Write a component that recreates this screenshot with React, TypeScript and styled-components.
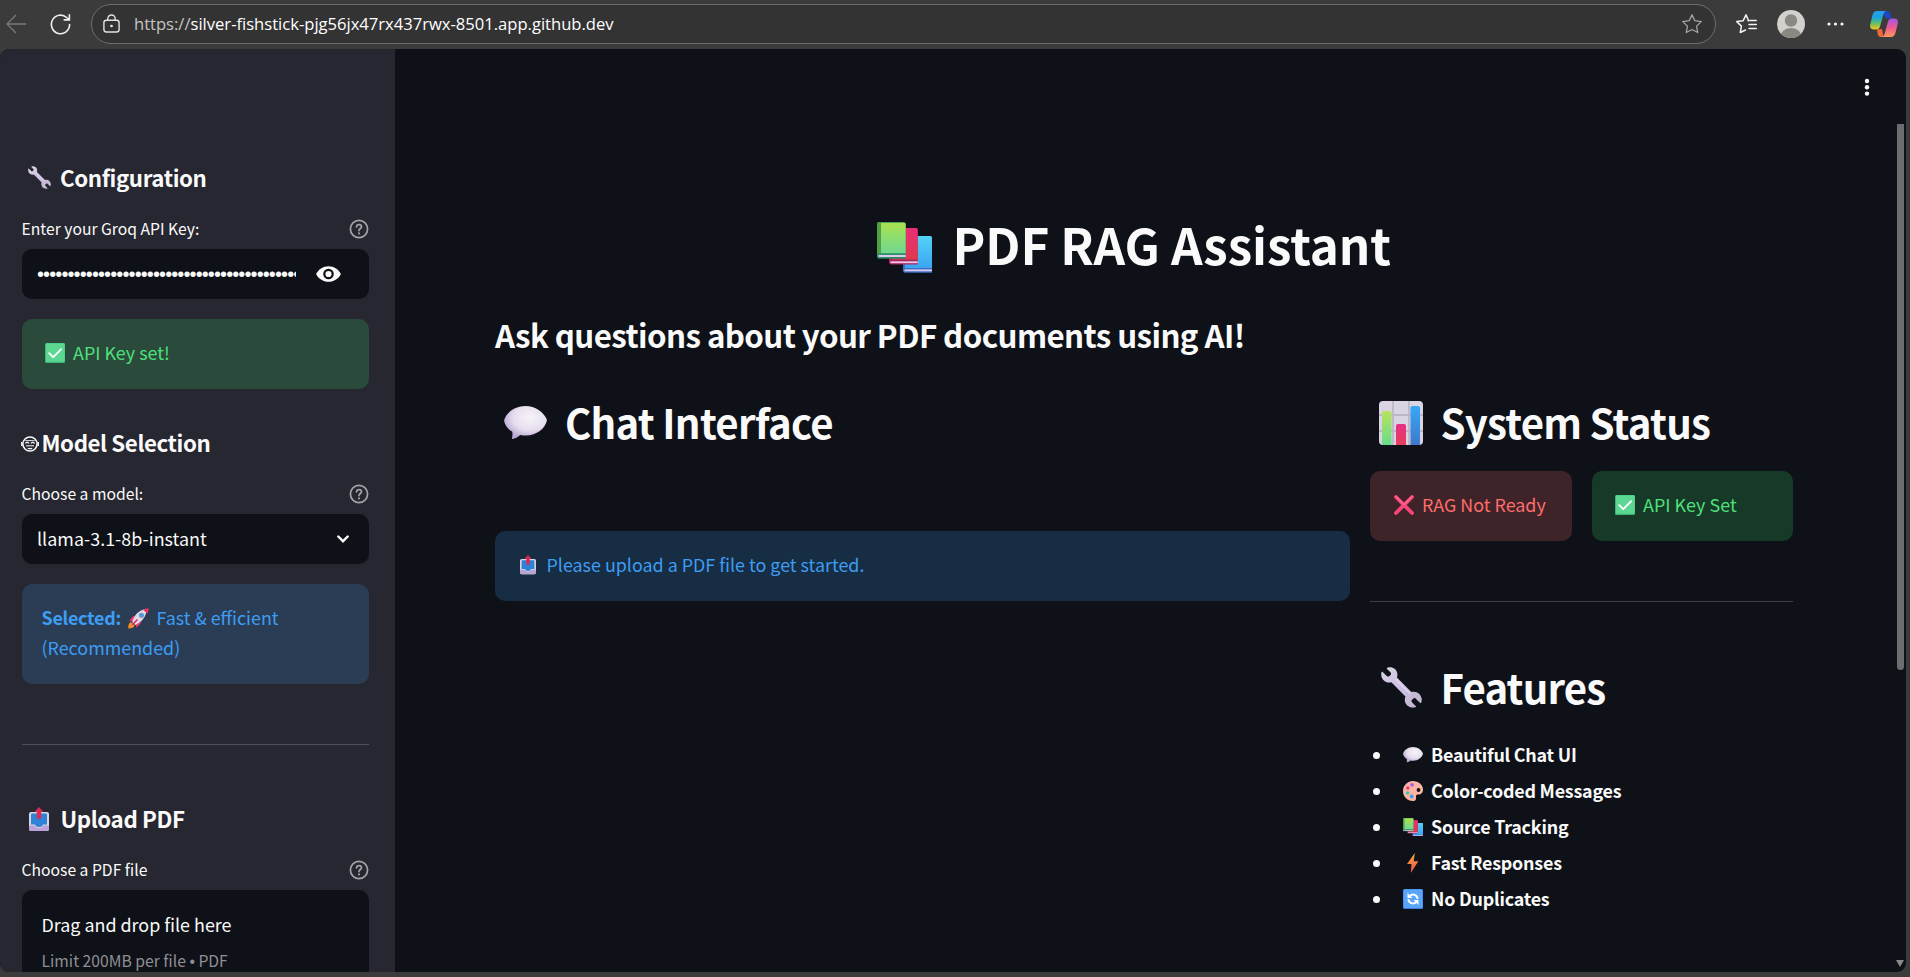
import React from "react";
import styled, { createGlobalStyle } from "styled-components";

const Global = createGlobalStyle`
  *{box-sizing:border-box}
  body{margin:0;background:#3b3b3b;overflow:hidden}
`;
const FONT = `"Noto Sans CJK SC","Noto Sans",sans-serif`;

const Window = styled.div`
  width:1910px;height:977px;display:flex;flex-direction:column;background:#3b3b3b;
  font-family:${FONT};color:#fafafa;
`;
const Toolbar = styled.header`
  height:49px;display:flex;align-items:center;padding:0 12px 1px 6px;flex:none;
`;
const IconSlot = styled.span<{ $w: number; $ml?: number; $mt?: number }>`
  display:flex;flex:none;width:${p => p.$w}px;margin-left:${p => p.$ml || 0}px;margin-top:${p => p.$mt || 0}px;
  svg{display:block;width:100%}
`;
const Address = styled.div`
  flex:none;width:1625px;height:40px;margin-left:20px;border:1px solid #6d6d6d;border-radius:20px;background:#333;
  display:flex;align-items:center;padding:0 13px 0 11px;
`;
const Url = styled.span`
  flex:1;margin-left:14px;font:16.6px/38px "Open Sans","Noto Sans",sans-serif;letter-spacing:-.01px;color:#fff;white-space:nowrap;
  i{font-style:normal;color:#c4c4c4}
`;
const Page = styled.div`
  width:1906px;height:923px;border-radius:9px;overflow:hidden;display:flex;background:#0e1117;
`;
const Sidebar = styled.aside`
  width:395px;flex:none;background:#262730;padding:113px 26px 0 22px;
`;
const Txt = styled.span<{ $s: number; $ls?: number; $b?: number; $ml?: number }>`
  font-size:${p => p.$s}px;letter-spacing:${p => p.$ls || 0}px;font-weight:${p => p.$b || 400};
  margin-left:${p => p.$ml || 0}px;white-space:nowrap;line-height:inherit;
`;
const Bullet = styled.span`font-family:"Liberation Sans",sans-serif;`;
const SideHeading = styled.h3<{ $mt?: number }>`
  margin:${p => p.$mt || 0}px 0 0;height:31px;line-height:31px;display:flex;align-items:center;font-size:22px;
`;
const Label = styled.div`
  margin:21px 0 5px;height:30px;line-height:30px;display:flex;align-items:center;justify-content:space-between;
`;
const Field = styled.div<{ $pr?: number }>`
  height:50px;line-height:48px;border-radius:10px;background:#0e1117;display:flex;align-items:center;
  padding:0 ${p => p.$pr || 20}px 0 15px;justify-content:space-between;
`;
const FieldText = styled.span`height:50px;`;
const Dots = styled.span`
  width:259px;overflow:hidden;white-space:nowrap;font:20px/50px "Liberation Sans",sans-serif;letter-spacing:-.9px;
`;
const tones = {
  greenSide: ["#2a4a3b", "#4fe07c"], blueSide: ["#2b3d55", "#3d9df3"],
  red: ["#3e2428", "#ff6c6c"], green: ["#173928", "#4fe07c"], blue: ["#172d43", "#3d9df3"],
};
const Alert = styled.div<{ $t: keyof typeof tones; $mt?: number; $pl?: number; $w?: number }>`
  margin-top:${p => p.$mt || 0}px;padding:19px 0 21px ${p => p.$pl || 20}px;border-radius:10px;line-height:30px;
  width:${p => (p.$w ? p.$w + "px" : "auto")};background:${p => tones[p.$t][0]};color:${p => tones[p.$t][1]};
`;
const Line = styled.div`
  height:30px;display:flex;align-items:center;
  ${Txt}{height:30px;line-height:29px;padding-bottom:1px}
`;
const Rule = styled.hr<{ $c: string }>`
  border:0;height:1px;margin:60px 0 0;background:${p => p.$c};
`;
const Drop = styled.div`
  height:120px;border-radius:10px 10px 0 0;background:#0e1117;padding:19px 20px 0 19.500px;
`;
const DropLine = styled.div<{ $h: number; $dim?: boolean }>`
  height:${p => p.$h}px;line-height:${p => p.$h}px;color:${p => (p.$dim ? "#8e8f94" : "#fafafa")};
`;
const Main = styled.main`width:1501px;flex:none;padding:155px 0 0 100px;`;
const Title = styled.h1`margin:0;height:80px;line-height:80px;display:flex;align-items:center;padding-left:382px;`;
const Sub = styled.h3`margin:26px 0 0;height:50px;line-height:50px;`;
const Columns = styled.div`display:flex;gap:20px;margin-top:31px;`;
const Column = styled.section<{ $w: number }>`width:${p => p.$w}px;flex:none;`;
const Heading = styled.h2<{ $mt?: number; $pl?: number }>`
  margin:${p => p.$mt || 0}px 0 0;height:61px;line-height:61px;display:flex;align-items:center;padding-left:${p => p.$pl || 9}px;
`;
const Pair = styled.div`display:flex;gap:20px;margin-top:19px;`;
const List = styled.ul`list-style:none;margin:20px 0 0;padding:0;`;
const Item = styled.li`
  height:36px;line-height:34px;display:flex;align-items:center;
  ${Txt}{height:36px}
  &::before{content:"";width:7px;height:7px;border-radius:50%;background:#fafafa;margin-left:3px;margin-right:23px;}
`;
const Gutter = styled.div`width:10px;flex:none;display:flex;flex-direction:column;align-items:center;padding-right:2px;`;
const MenuCol = styled.div`position:absolute;left:1862.500px;top:76.500px;width:8px;`;
const Thumb = styled.div`width:7px;height:546px;margin-top:75px;background:#6c6d70;border-radius:0 0 4px 4px;`;
const Arrow = styled.div`
  margin-top:290px;width:0;height:0;border-left:4px solid transparent;border-right:4px solid transparent;border-top:7px solid #8a8a8a;
`;

/* ---------- icons ---------- */
const Help = () => (
  <IconSlot $w={20}><svg viewBox="0 0 20 20" fill="none" stroke="#a3a4a8" strokeWidth="1.7" strokeLinecap="round">
    <circle cx="10" cy="10" r="8.6" /><path d="M7.5 7.8c.2-1.500 1.200-2.200 2.500-2.200s2.500.8 2.500 2.100c0 1.700-2.500 1.900-2.500 3.900" /><path d="M10 14.300v.1" strokeWidth="2" />
  </svg></IconSlot>
);
const Wrench = ({ w }: { w: number }) => (
  <svg viewBox="0 0 42 42" width={w} display="block">
    <defs><linearGradient id="wr" x1="0" y1="0" x2="1" y2="1"><stop offset="0" stopColor="#d8d4de" /><stop offset=".5" stopColor="#cdbfe6" /><stop offset="1" stopColor="#bdb6c6" /></linearGradient></defs>
    <path fill="url(#wr)" d="M6.500.8c4.500-1.600 10 1.200 10.300 6.500.1 1.300-.1 2.500-.5 3.500l14.800 14.900c4.700-1.500 9.600 1.700 10.500 6.300.4 1.600.1 3.300-.5 4.500-.3.500-.8.500-1.200.1l-4.300-4.200c-.8-.8-2-.6-2.700.1l-1.100 1.100c-.8.8-.8 1.700-.1 2.500l3.800 3.900c.5.500.4 1-.2 1.200-5.500 1.700-11.500-2.300-10.900-8.500.1-.8.300-1.600.6-2.400L10.600 15.600C5.600 17.200.3 13.200.2 7.900c0-1 .1-1.900.4-2.700.2-.5.7-.6 1.100-.2l4.200 4.200c.8.8 2 .8 2.800 0l1-1c.8-.8.8-2 0-2.800L6.200 2c-.4-.4-.3-1 .3-1.200z" />
    <path d="M15 12.500l15 15" stroke="#e9e2f6" strokeWidth="1.600" opacity=".7" />
  </svg>
);
const Check = () => (
  <svg viewBox="0 0 20 20" width="20" display="block">
    <rect width="20" height="20" rx="1.500" fill="#3fb57a" /><rect x="1" y=".3" width="18.700" height="18.500" rx="1.300" fill="#5bd792" />
    <path d="M4.200 10.200l4 4L16 6.300" fill="none" stroke="#fff" strokeWidth="1.900" strokeLinecap="round" strokeLinejoin="round" />
  </svg>
);
const Cross = () => (
  <svg viewBox="0 0 20 20" width="20" display="block">
    <path d="M2 2l16 16M18 2L2 18" stroke="#f8467a" strokeWidth="3.800" strokeLinecap="round" /><path d="M2 1.700l8 8 8-8" fill="none" stroke="#ff6f93" strokeWidth="1.200" strokeLinecap="round" />
  </svg>
);
const Books = ({ w }: { w: number }) => (
  <svg viewBox="0 0 55 51" width={w} display="block">
    <defs>
      <linearGradient id="bg" x1="0" y1="0" x2="0" y2="1"><stop offset="0" stopColor="#a9e24f" /><stop offset="1" stopColor="#6fd892" /></linearGradient>
      <linearGradient id="br" x1="0" y1="0" x2="0" y2="1"><stop offset="0" stopColor="#e62f78" /><stop offset="1" stopColor="#e2394c" /></linearGradient>
      <linearGradient id="bb" x1="0" y1="0" x2="0" y2="1"><stop offset="0" stopColor="#55d3f5" /><stop offset="1" stopColor="#3aa5f3" /></linearGradient>
    </defs>
    <path d="M26 14h27q2 0 2 2v34.700H28q-2 0-2-2z" fill="#3a70c8" /><path d="M28 14h25q2 0 2 2v30H28z" fill="url(#bb)" /><path d="M27.500 47.400H55v1.900H27.500z" fill="#dcc9f0" />
    <path d="M12 6h27q1.700 0 1.700 2v34.500H14q-2 0-2-2z" fill="#a8245e" /><path d="M15 6h24q1.700 0 1.700 2v29.500H15z" fill="url(#br)" /><path d="M13.500 39.300h27.200v1.900H13.500z" fill="#ecc6e8" />
    <path d="M0 2q0-2 2-2h25q1.700 0 1.700 2v34.700H2q-2 0-2-2z" fill="#2f8a63" /><path d="M0 2q0-2 2-2h2v31.500H0z" fill="#4fa044" /><path d="M4 .8h23q1.700 0 1.700 1.500v29H4z" fill="url(#bg)" /><path d="M1.500 33h27.200v2H1.500z" fill="#dccdf0" />
  </svg>
);
const Bubble = ({ w }: { w: number }) => (
  <svg viewBox="0 0 43 33" width={w} display="block">
    <defs><radialGradient id="bu" cx=".6" cy=".35" r=".65"><stop offset="0" stopColor="#f7f4f8" /><stop offset=".6" stopColor="#e6deee" /><stop offset="1" stopColor="#b7a6d2" /></radialGradient></defs>
    <path fill="url(#bu)" d="M21.500 0C31 0 40 6 43 14c-1.500 8.500-10.500 15.500-21 15.500-2 0-4-.2-5.800-.6-2 1.800-4.500 3.400-7.500 4-.6.100-.9-.3-.7-.9.500-2 .6-4 .3-6.200C4 23.500 1 19.500 0 14.500 2.500 6 11.500 0 21.500 0z" />
  </svg>
);
const Chart = () => (
  <svg viewBox="0 0 44 44" width="44" display="block">
    <defs>
      <linearGradient id="c1" x1="0" y1="0" x2="0" y2="1"><stop offset="0" stopColor="#b9e35a" /><stop offset="1" stopColor="#66dc8c" /></linearGradient>
      <linearGradient id="c2" x1="0" y1="0" x2="0" y2="1"><stop offset="0" stopColor="#e92f86" /><stop offset="1" stopColor="#e4405a" /></linearGradient>
      <linearGradient id="c3" x1="0" y1="0" x2="0" y2="1"><stop offset="0" stopColor="#34a9f6" /><stop offset="1" stopColor="#3f78cc" /></linearGradient>
    </defs>
    <rect width="44" height="44" rx="4" fill="#d9d3e2" />
    <path d="M14 0v44M30 0v44M0 14h44M0 30h44" stroke="#bdb6c8" strokeWidth="1.800" />
    <path d="M3 12q0-2 2-2h5.500q2 0 2 2v32H4q-1 0-1-1z" fill="url(#c1)" /><path d="M17 25q0-2 2-2h6q2 0 2 2v19H17z" fill="url(#c2)" /><path d="M31.500 7q0-2 2-2H39q2 0 2 2v37h-9.500z" fill="url(#c3)" />
  </svg>
);
const Outbox = ({ w }: { w: number }) => (
  <svg viewBox="0 0 20 24" width={w} display="block">
    <rect y="5" width="20" height="19" rx="2" fill="#d9d5e4" /><path d="M0 18.500h5.500q1 2.500 4.500 2.500t4.500-2.500H20V22q0 2-2 2H2q-2 0-2-2z" fill="#b9a2d8" />
    <path d="M2 7.500q0-1 1-1h14q1 0 1 1v10h-4q-.5 2.500-4 2.500t-4-2.500H2z" fill="#2f83d6" /><path d="M10 0l4.500 4.800h-2.300v7H7.800v-7H5.500z" fill="#d92a55" />
  </svg>
);
const Rocket = () => (
  <svg viewBox="0 0 21 21" width="21" display="block">
    <path d="M.3 20.500c-.3-3 .6-5.500 2.500-6.500l4 3.500c-1 2-3.300 3.200-6.500 3z" fill="#f98a2a" /><path d="M1.300 12.500l4-4.500 4 1-4 5zM8.500 19.500l4.300-4.300-.4-4.200-5 4.800z" fill="#f0386b" />
    <path d="M4.300 14.500C5.500 8 10.500 2 18.300.8c.8 6.500-3.800 13-11 16.200z" fill="#ded8e8" /><path d="M15 1.700Q17.500.4 20.700.3q0 3-1.200 5.500z" fill="#ea3560" /><circle cx="13.500" cy="7.300" r="2.600" fill="#8697b0" /><circle cx="13.500" cy="7.300" r="1.700" fill="#3d9cf0" /><path d="M4.300 16.700l5.200-5.200" stroke="#d52c60" strokeWidth="1.600" />
  </svg>
);
const Robot = () => (
  <svg viewBox="0 0 18 16" width="18" display="block" fill="none" stroke="#fafafa">
    <ellipse cx="9" cy="8" rx="7.100" ry="7" strokeWidth="1.500" /><path d="M.8 6v4M17.200 6v4" strokeWidth="1.500" />
    <path d="M4.300 4.600h9.400" strokeWidth=".9" /><path d="M4.300 7.400q1.900-2 3.800 0M9.900 7.400q1.900-2 3.800 0" strokeWidth="1.100" /><path d="M5 9.800h8" strokeWidth="1" /><path d="M6.800 12.300q2.200.8 4.400 0" strokeWidth="1.300" />
  </svg>
);
const Palette = () => (
  <svg viewBox="0 0 20 20" width="20" display="block">
    <path d="M10 0c5.500 0 10 4 10 8.500 0 3.500-2 5-4.500 5-1.500 0-2.800.5-2.500 2 .3 2.500 0 4.500-3 4.500C4 20 0 15.500 0 10S4.500 0 10 0z" fill="#fbb5a2" />
    <circle cx="15.500" cy="9" r="1.900" fill="#161317" /><circle cx="9" cy="3.800" r="1.900" fill="#b65ce6" /><circle cx="4.800" cy="7" r="1.800" fill="#ee3b7d" /><circle cx="4.600" cy="12" r="1.800" fill="#35c9b4" /><circle cx="8.700" cy="15.400" r="1.900" fill="#3a9df0" />
  </svg>
);
const Bolt = () => (
  <svg viewBox="0 0 20 20" width="20" display="block">
    <defs><linearGradient id="bo" x1="0" y1="0" x2="0" y2="1"><stop offset="0" stopColor="#fcb23c" /><stop offset="1" stopColor="#f0484e" /></linearGradient></defs>
    <path d="M11.800 0L4 11h4.500L7.800 20 15.300 8.300h-4.600z" fill="url(#bo)" />
  </svg>
);
const Cycle = () => (
  <svg viewBox="0 0 20 20" width="20" display="block">
    <rect width="20" height="20" rx="1.500" fill="#3a7ce0" /><rect x=".5" y=".3" width="19" height="18.700" rx="1.300" fill="#58a5fb" />
    <path d="M6.800 6.900a4.600 4.600 0 0 1 7.800 3M13.200 13.100a4.600 4.600 0 0 1-7.800-3" fill="none" stroke="#fff" strokeWidth="1.900" /><path d="M4.500 4v5h5zM15.500 16v-5h-5z" fill="#fff" />
  </svg>
);
const Star = ({ c }: { c: string }) => (
  <svg viewBox="0 0 20 20" fill="none" stroke={c} strokeWidth="1.300" strokeLinejoin="round"><path d="M10 .9l2.800 5.800 6.400.9-4.600 4.500 1.100 6.400L10 15.500l-5.700 3 1.100-6.400L.8 7.600l6.400-.9z" /></svg>
);
const Copilot = () => (
  <svg viewBox="0 0 28 26">
    <defs>
      <linearGradient id="p1" x1="0" y1="0" x2="0" y2="1"><stop offset="0" stopColor="#2a9df0" /><stop offset=".35" stopColor="#18a5dc" /><stop offset=".65" stopColor="#5cbf6c" /><stop offset="1" stopColor="#f2c51c" /></linearGradient>
      <linearGradient id="p2" x1="0" y1="0" x2="0" y2="1"><stop offset="0" stopColor="#a455ec" /><stop offset=".5" stopColor="#ee5a90" /><stop offset="1" stopColor="#fb9a58" /></linearGradient>
    </defs>
    <path d="M12 0h5q2.500 0 3.200 2.600l1.300 4.600h-5.500z" fill="#1b48c8" /><path d="M7 18.400l5-.4 1.500 8H11q-2.500 0-3.200-2.600z" fill="#f2683a" />
    <path d="M7 0h9q-1.800.6-2.500 3l-3.500 12.500q-.8 2.900-3.500 2.900H4q-4.800 0-3.800-5L2.500 4.200Q3.700 0 7 0z" fill="url(#p1)" />
    <path d="M21 26h-9q1.800-.6 2.500-3L18 10.500q.8-2.900 3.500-2.900H24q4.800 0 3.800 5l-2.300 9.200Q24.300 26 21 26z" fill="url(#p2)" />
  </svg>
);

const features = [
  { icon: <Bubble w={20} />, text: "Beautiful Chat UI" },
  { icon: <Palette />, text: "Color-coded Messages" },
  { icon: <Books w={20} />, text: "Source Tracking" },
  { icon: <Bolt />, text: "Fast Responses" },
  { icon: <Cycle />, text: "No Duplicates" },
];

export default function App() {
  return (
    <Window>
      <Global />
      <Toolbar>
        <IconSlot $w={20}><svg viewBox="0 0 20 20" fill="none" stroke="#7a7a7a" strokeWidth="1.300"><path d="M20 10H1M10 1L1 10l9 9" /></svg></IconSlot>
        <IconSlot $w={21} $ml={24}><svg viewBox="0 0 21 21" fill="none" stroke="#f0f0f0" strokeWidth="1.600" strokeLinecap="round"><path d="M19.600 10.500a9.100 9.300 0 1 1-3-7l2.600 2.300M19.400.8v5.100h-5.200" /></svg></IconSlot>
        <Address>
          <IconSlot $w={17} $mt={-1}><svg viewBox="0 0 17 19" fill="none" stroke="#e2e2e2" strokeWidth="1.400"><rect x=".9" y="6.200" width="15.200" height="11.800" rx="2.400" /><path d="M4.800 6V4.700a3.700 3.700 0 0 1 7.400 0V6" /><circle cx="8.500" cy="12" r="1" fill="#e2e2e2" stroke="none" /><circle cx="8.500" cy="12" r=".6" /></svg></IconSlot>
          <Url><i>https://</i>silver-fishstick-pjg56jx47rx437rwx-8501.app.github.dev</Url>
          <IconSlot $w={20}><Star c="#a5a5a5" /></IconSlot>
        </Address>
        <IconSlot $w={21} $ml={20}><svg viewBox="0 0 21 20" fill="none" stroke="#f4f4f4" strokeWidth="1.500" strokeLinejoin="round" strokeLinecap="round"><path d="M12 6.700h.7L10 .9 7.200 6.700l-6.400.9 4.600 4.500-1.100 6.400L9.500 16M14 6.500h6.300M13 10.500h7.300M13 14.500h7.300" /></svg></IconSlot>
        <IconSlot $w={28} $ml={20}><svg viewBox="0 0 28 28"><defs><clipPath id="av"><circle cx="14" cy="14" r="14" /></clipPath></defs><g clipPath="url(#av)"><rect width="28" height="28" fill="#d3d1ce" /><circle cx="14" cy="10.500" r="6.200" fill="#8b8783" /><ellipse cx="14" cy="26.500" rx="10.500" ry="8.500" fill="#8b8783" /></g></svg></IconSlot>
        <IconSlot $w={17} $ml={22}><svg viewBox="0 0 17 4" fill="#f4f4f4"><circle cx="2" cy="2" r="1.600" /><circle cx="8.500" cy="2" r="1.600" /><circle cx="15" cy="2" r="1.600" /></svg></IconSlot>
        <IconSlot $w={28} $ml={26}><Copilot /></IconSlot>
      </Toolbar>
      <Page>
        <Sidebar>
          <SideHeading><IconSlot $w={23} $ml={6}><Wrench w={23} /></IconSlot><Txt $s={22.3} $b={600} $ls={-0.4} $ml={9}>Configuration</Txt></SideHeading>
          <Label><Txt $s={15.7} $ml={-0.5}>Enter your Groq API Key:</Txt><Help /></Label>
          <Field $pr={28}>
            <Dots>{"•".repeat(43)}</Dots>
            <IconSlot $w={25}><svg viewBox="0 0 25 16"><path d="M12.500.2C18 .2 22.700 3.400 24.900 8c-2.200 4.600-6.900 7.800-12.400 7.800S2.300 12.600.1 8C2.300 3.400 7 .2 12.500.2z" fill="#fafafa" /><circle cx="12.500" cy="8" r="4.200" fill="none" stroke="#0e1117" strokeWidth="2.200" /></svg></IconSlot>
          </Field>
          <Alert $t="greenSide" $mt={20} $pl={23}><Line><Check /><Txt $s={17.9} $ml={8}>API Key set!</Txt></Line></Alert>
          <SideHeading $mt={38}><IconSlot $w={18} $ml={-1.5} $mt={2}><Robot /></IconSlot><Txt $s={22.3} $b={600} $ls={-0.42} $ml={3}>Model Selection</Txt></SideHeading>
          <Label><Txt $s={15.7} $ml={-0.5}>Choose a model:</Txt><Help /></Label>
          <Field><FieldText><Txt $s={17.9} $ls={0.02}>llama-3.1-8b-instant</Txt></FieldText><IconSlot $w={12}><svg viewBox="0 0 12 8" fill="none" stroke="#fafafa" strokeWidth="2.400" strokeLinecap="round"><path d="M1.300 1.500L6 6.200l4.700-4.700" /></svg></IconSlot></Field>
          <Alert $t="blueSide" $mt={20} $pl={19.5}>
            <Line><Txt $s={17.9} $b={600} $ls={-0.25}>Selected:</Txt><IconSlot $w={21} $ml={7}><Rocket /></IconSlot><Txt $s={17.9} $ml={7.5}>Fast &amp; efficient</Txt></Line>
            <Line><Txt $s={17.9}>(Recommended)</Txt></Line>
          </Alert>
          <Rule $c="#4f5058" />
          <SideHeading $mt={58}><IconSlot $w={20} $ml={7}><Outbox w={20} /></IconSlot><Txt $s={22.3} $b={600} $ls={-0.4} $ml={11.5}>Upload PDF</Txt></SideHeading>
          <Label><Txt $s={15.7} $ml={-0.5}>Choose a PDF file</Txt><Help /></Label>
          <Drop>
            <DropLine $h={30}><Txt $s={17.9}>Drag and drop file here</Txt></DropLine>
            <DropLine $h={43} $dim><Txt $s={15.7}>Limit 200MB per file <Bullet>•</Bullet> PDF</Txt></DropLine>
          </Drop>
        </Sidebar>
        <Main>
          <Title><IconSlot $w={55} $mt={6}><Books w={55} /></IconSlot><Txt $s={49.3} $b={700} $ls={-0.06} $ml={20.5}>PDF RAG Assistant</Txt></Title>
          <Sub><Txt $s={31.3} $b={600} $ls={-0.59}>Ask questions about your PDF documents using AI!</Txt></Sub>
          <Columns>
            <Column $w={855}>
              <Heading><IconSlot $w={43} $mt={2}><Bubble w={43} /></IconSlot><Txt $s={40.2} $b={600} $ls={-0.75} $ml={18}>Chat Interface</Txt></Heading>
              <Alert $t="blue" $mt={79} $pl={25}><Line><Outbox w={16} /><Txt $s={17.9} $ml={10.5}>Please upload a PDF file to get started.</Txt></Line></Alert>
            </Column>
            <Column $w={423}>
              <Heading><IconSlot $w={44} $mt={2}><Chart /></IconSlot><Txt $s={40.2} $b={600} $ls={-0.78} $ml={17.5}>System Status</Txt></Heading>
              <Pair>
                <Alert $t="red" $w={202} $pl={24}><Line><Cross /><Txt $s={17.9} $ml={8}>RAG Not Ready</Txt></Line></Alert>
                <Alert $t="green" $w={201} $pl={23}><Line><Check /><Txt $s={17.9} $ls={0.04} $ml={8}>API Key Set</Txt></Line></Alert>
              </Pair>
              <Rule $c="#3e4046" />
              <Heading $mt={54} $pl={11}><IconSlot $w={41} $mt={2}><Wrench w={41} /></IconSlot><Txt $s={40.2} $b={600} $ls={-0.8} $ml={18.5}>Features</Txt></Heading>
              <List>{features.map(f => <Item key={f.text}>{f.icon}<Txt $s={17.9} $b={600} $ls={-0.22} $ml={8}>{f.text}</Txt></Item>)}</List>
            </Column>
          </Columns>
        </Main>
        <Gutter><Thumb /><Arrow /></Gutter>
      </Page>
      <MenuCol><svg viewBox="0 0 8 20" width="8" fill="#fafafa"><circle cx="4" cy="4" r="2.200" /><circle cx="4" cy="10.300" r="2.200" /><circle cx="4" cy="16.600" r="2.200" /></svg></MenuCol>
    </Window>
  );
}
